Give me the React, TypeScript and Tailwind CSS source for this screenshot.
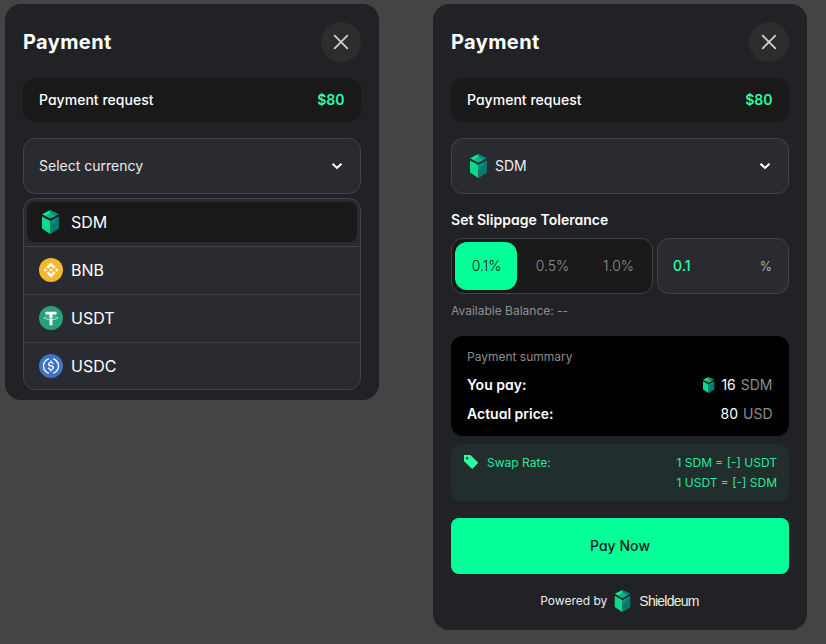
import type { ReactNode } from "react";

interface IconProps {
  className?: string;
}

function ShieldIcon({ className = "size-6" }: IconProps) {
  return (
    <svg viewBox="0 0 24 24" className={className} fill="none">
      <path d="M11.5 0 3 4.2l8.5 4.4z" fill="#07EE94" />
      <path d="M11.5 0 20 4.2l-8.5 4.4z" fill="#07897E" />
      <path d="M11.5 2.600 6.500 6l5 2.600 5-2.600z" fill="#08B386" />
      <path d="M3 6.400l8.500 4.700v13.100L3 18.600z" fill="#07DA8A" />
      <path d="M20 6.400l-8.500 4.700v13.100l8.500-5.600z" fill="#067A71" />
      <path d="M20 6.400l-8.500 4.700v6z" fill="#08917B" />
    </svg>
  );
}

function BnbIcon() {
  return (
    <svg viewBox="0 0 32 32" className="size-6" fill="none">
      <circle cx="16" cy="16" r="16" fill="#F3BA2F" />
      <path
        fill="#fff"
        d="M12.116 14.404L16 10.52l3.886 3.886 2.26-2.26L16 6l-6.144 6.144 2.26 2.26zM6 16l2.26-2.26L10.52 16l-2.26 2.26L6 16zm6.116 1.596L16 21.48l3.886-3.886 2.26 2.259L16 26l-6.144-6.144-.003-.003 2.263-2.257zM21.48 16l2.26-2.26L26 16l-2.26 2.26L21.48 16zm-3.188-.002h.002V16L16 18.294l-2.291-2.29-.004-.004.004-.003.401-.402.195-.195L16 13.706l2.293 2.293z"
      />
    </svg>
  );
}

function UsdtIcon() {
  return (
    <svg viewBox="0 0 32 32" className="size-6" fill="none">
      <circle cx="16" cy="16" r="16" fill="#26A17B" />
      <path
        fill="#fff"
        d="M17.922 17.383v-.002c-.11.008-.677.042-1.942.042-1.01 0-1.721-.03-1.971-.042v.003c-3.888-.171-6.79-.848-6.79-1.658 0-.809 2.902-1.486 6.79-1.66v2.644c.254.018.982.061 1.988.061 1.207 0 1.812-.05 1.925-.06v-2.643c3.88.173 6.775.85 6.775 1.658 0 .81-2.895 1.485-6.775 1.657m0-3.59v-2.366h5.414V7.819H8.595v3.608h5.414v2.365c-4.4.202-7.709 1.074-7.709 2.118 0 1.044 3.309 1.915 7.709 2.118v7.582h3.913v-7.584c4.393-.202 7.694-1.073 7.694-2.116 0-1.043-3.301-1.914-7.694-2.117"
      />
    </svg>
  );
}

function UsdcIcon() {
  return (
    <svg viewBox="0 0 32 32" className="size-6" fill="none">
      <circle cx="16" cy="16" r="16" fill="#3E73C4" />
      <path
        fill="#fff"
        d="M20.022 18.124c0-2.124-1.28-2.852-3.84-3.156-1.828-.243-2.193-.728-2.193-1.578 0-.85.61-1.396 1.828-1.396 1.097 0 1.707.364 2.011 1.275a.458.458 0 00.427.303h.975a.416.416 0 00.427-.425v-.06a3.04 3.04 0 00-2.743-2.489V9.142c0-.243-.183-.425-.487-.486h-.915c-.243 0-.426.182-.487.486v1.396c-1.829.242-2.986 1.456-2.986 2.974 0 2.002 1.218 2.791 3.778 3.095 1.707.303 2.255.668 2.255 1.639 0 .97-.853 1.638-2.011 1.638-1.585 0-2.133-.667-2.316-1.578-.06-.242-.244-.364-.427-.364h-1.036a.416.416 0 00-.426.425v.06c.243 1.518 1.219 2.61 3.23 2.914v1.457c0 .242.183.425.487.485h.915c.243 0 .426-.182.487-.485V21.34c1.829-.303 3.047-1.578 3.047-3.217z"
      />
      <path
        fill="#fff"
        d="M12.892 24.497c-4.754-1.7-7.192-6.98-5.424-11.653.914-2.55 2.925-4.491 5.424-5.402.244-.121.365-.303.365-.607v-.85c0-.242-.121-.424-.365-.485-.061 0-.183 0-.244.06a10.895 10.895 0 00-7.13 13.717c1.096 3.4 3.717 6.01 7.13 7.102.244.121.488 0 .548-.243.061-.06.061-.122.061-.243v-.85c0-.182-.182-.424-.365-.546zm6.46-18.936c-.244-.122-.488 0-.548.242-.061.061-.061.122-.061.243v.85c0 .243.182.485.365.607 4.754 1.7 7.192 6.98 5.424 11.653-.914 2.55-2.925 4.491-5.424 5.402-.244.121-.365.303-.365.607v.85c0 .242.121.424.365.485.061 0 .183 0 .244-.06a10.895 10.895 0 007.13-13.717c-1.096-3.46-3.778-6.07-7.13-7.162z"
      />
    </svg>
  );
}

function ChevronIcon() {
  return (
    <svg viewBox="0 0 16 16" className="size-4" fill="none">
      <path d="M3.5 5.7 8 9.9l4.5-4.2" stroke="#fff" strokeWidth="2.1" />
    </svg>
  );
}

function TagIcon() {
  return (
    <svg viewBox="0 0 16 16" className="mt-px size-4" fill="none">
      <path
        fillRule="evenodd"
        fill="#2EFEA5"
        d="M1 1h6.4l7.4 7.2q.5.5 0 1L9.7 14.6q-.5.5-1 0L1 7.2zM4.2 5.4a1.2 1.2 0 1 0 0-2.4 1.2 1.2 0 0 0 0 2.4z"
      />
    </svg>
  );
}

function Card({ children }: { children: ReactNode }) {
  return (
    <div className="w-[374px] rounded-2xl bg-[#212226] p-[18px]">
      <div className="flex h-10 items-center justify-between">
        <h2 className="text-xl font-bold tracking-[0.4px]">Payment</h2>
        <button className="flex size-10 items-center justify-center rounded-full bg-[#2d2d2d]">
          <svg viewBox="0 0 16 16" className="size-4" fill="none">
            <path d="M1.2 1.2l13.6 13.6M14.8 1.2 1.2 14.8" stroke="#cfcfcf" strokeWidth="1.8" />
          </svg>
        </button>
      </div>
      <div className="mt-4 flex h-11 items-center justify-between rounded-xl bg-[#19191a] pr-[16.5px] pl-4 text-sm font-medium [font-feature-settings:'cv11']">
        <span className="tracking-[0.03px]">Payment request</span>
        <span className="font-semibold text-[#2efea5]">$80</span>
      </div>
      {children}
    </div>
  );
}

function Select({ children }: { children: ReactNode }) {
  return (
    <div className="mt-4 flex h-14 items-center justify-between rounded-xl border border-[#424346] bg-[#2a2b30] px-[15px] text-sm">
      {children}
      <ChevronIcon />
    </div>
  );
}

const currencies = [
  { name: "SDM", icon: <ShieldIcon /> },
  { name: "BNB", icon: <BnbIcon /> },
  { name: "USDT", icon: <UsdtIcon /> },
  { name: "USDC", icon: <UsdcIcon /> },
];

export default function App() {
  return (
    <div className="flex h-[644px] w-[826px] items-start gap-[54px] bg-[#444] pt-1 pl-[5px] font-['Inter',sans-serif] text-white">
      <Card>
        <Select>
          <span className="text-[#ececec]">Select currency</span>
        </Select>
        <ul className="mt-1 -mb-2 divide-y divide-[#424346] rounded-xl border border-[#424346] bg-[#2a2b30]">
          {currencies.map(({ name, icon }, i) => (
            <li key={name} className={i === 0 ? "h-12 p-[3px]" : i === 3 ? "h-[46px]" : "h-12 pb-px"}>
              <div
                className={
                  i === 0
                    ? "flex h-10 items-center gap-2 rounded-lg bg-[#19191a] px-3 text-base"
                    : "flex h-full items-center gap-2 px-[15px] text-base"
                }
              >
                {icon}
                {name}
              </div>
            </li>
          ))}
        </ul>
      </Card>

      <Card>
        <Select>
          <span className="flex items-center gap-1 text-[#ececec]">
            <ShieldIcon />
            SDM
          </span>
        </Select>
        <h3 className="mt-4 text-sm leading-5 font-semibold tracking-[0.03px] [font-feature-settings:'cv11']">
          Set Slippage Tolerance
        </h3>
        <div className="mt-2 flex h-14 gap-1 text-sm">
          <div className="flex w-[202px] gap-1 rounded-xl border border-[#424346] bg-[#19191a] p-[3px] font-light text-[#8f8f90]">
            <button className="w-[62px] rounded-xl bg-[#05ff98] pl-px text-[#19191a]">0.1%</button>
            <button className="w-[62px] pl-px">0.5%</button>
            <button className="w-[62px] pl-px">1.0%</button>
          </div>
          <div className="flex flex-1 items-center justify-between rounded-xl border border-[#424346] bg-[#2a2b30] pr-4 pl-[15px]">
            <span className="font-medium text-[#2efea5]">0.1</span>
            <span className="text-[13px] font-light text-[#c0c0c2]">%</span>
          </div>
        </div>
        <p className="mt-2 text-xs leading-[18px] text-[#8f8f91]">Available Balance: --</p>

        <div className="mt-4 h-[100px] rounded-xl bg-black px-4 pt-3 text-sm">
          <p className="text-xs leading-[18px] text-[#8c8c8c]">Payment summary</p>
          <div className="mt-[9px] flex h-5 items-center justify-between">
            <span className="font-semibold [font-feature-settings:'cv11']">You pay:</span>
            <span className="flex items-center gap-[5px] pr-[0.5px]">
              <ShieldIcon className="-mr-px size-4" />
              <span>16</span>
              <span className="text-[#8c8c8c]">SDM</span>
            </span>
          </div>
          <div className="mt-[9px] flex h-5 items-center justify-between">
            <span className="font-semibold [font-feature-settings:'cv11']">Actual price:</span>
            <span className="flex gap-[5px] pr-[0.5px]">
              <span>80</span>
              <span className="text-[#8c8c8c]">USD</span>
            </span>
          </div>
        </div>

        <div className="mt-2 flex h-[58px] rounded-xl bg-[#222d2d] px-3 pt-[9px] text-xs leading-5 text-[#2be899]">
          <TagIcon />
          <span className="ml-2 flex-1">Swap Rate:</span>
          <div className="text-right">
            <p>1 SDM = [-] USDT</p>
            <p>1 USDT = [-] SDM</p>
          </div>
        </div>

        <button className="mt-4 h-14 w-full rounded-lg bg-[#05ff98] text-sm font-medium tracking-[0.05px] text-[#19191a] [font-feature-settings:'cv11']">
          Pay Now
        </button>
        <div className="mt-[15px] -mb-px flex h-6 items-center justify-center pr-px text-xs">
          <span className="text-[#ececec]">Powered by</span>
          <ShieldIcon className="ml-[5px] size-[22px]" />
          <span className="ml-[5px] font-['Liberation_Sans',sans-serif] text-sm tracking-[-0.75px] text-[#e9efdc]">
            Shieldeum
          </span>
        </div>
      </Card>
    </div>
  );
}
